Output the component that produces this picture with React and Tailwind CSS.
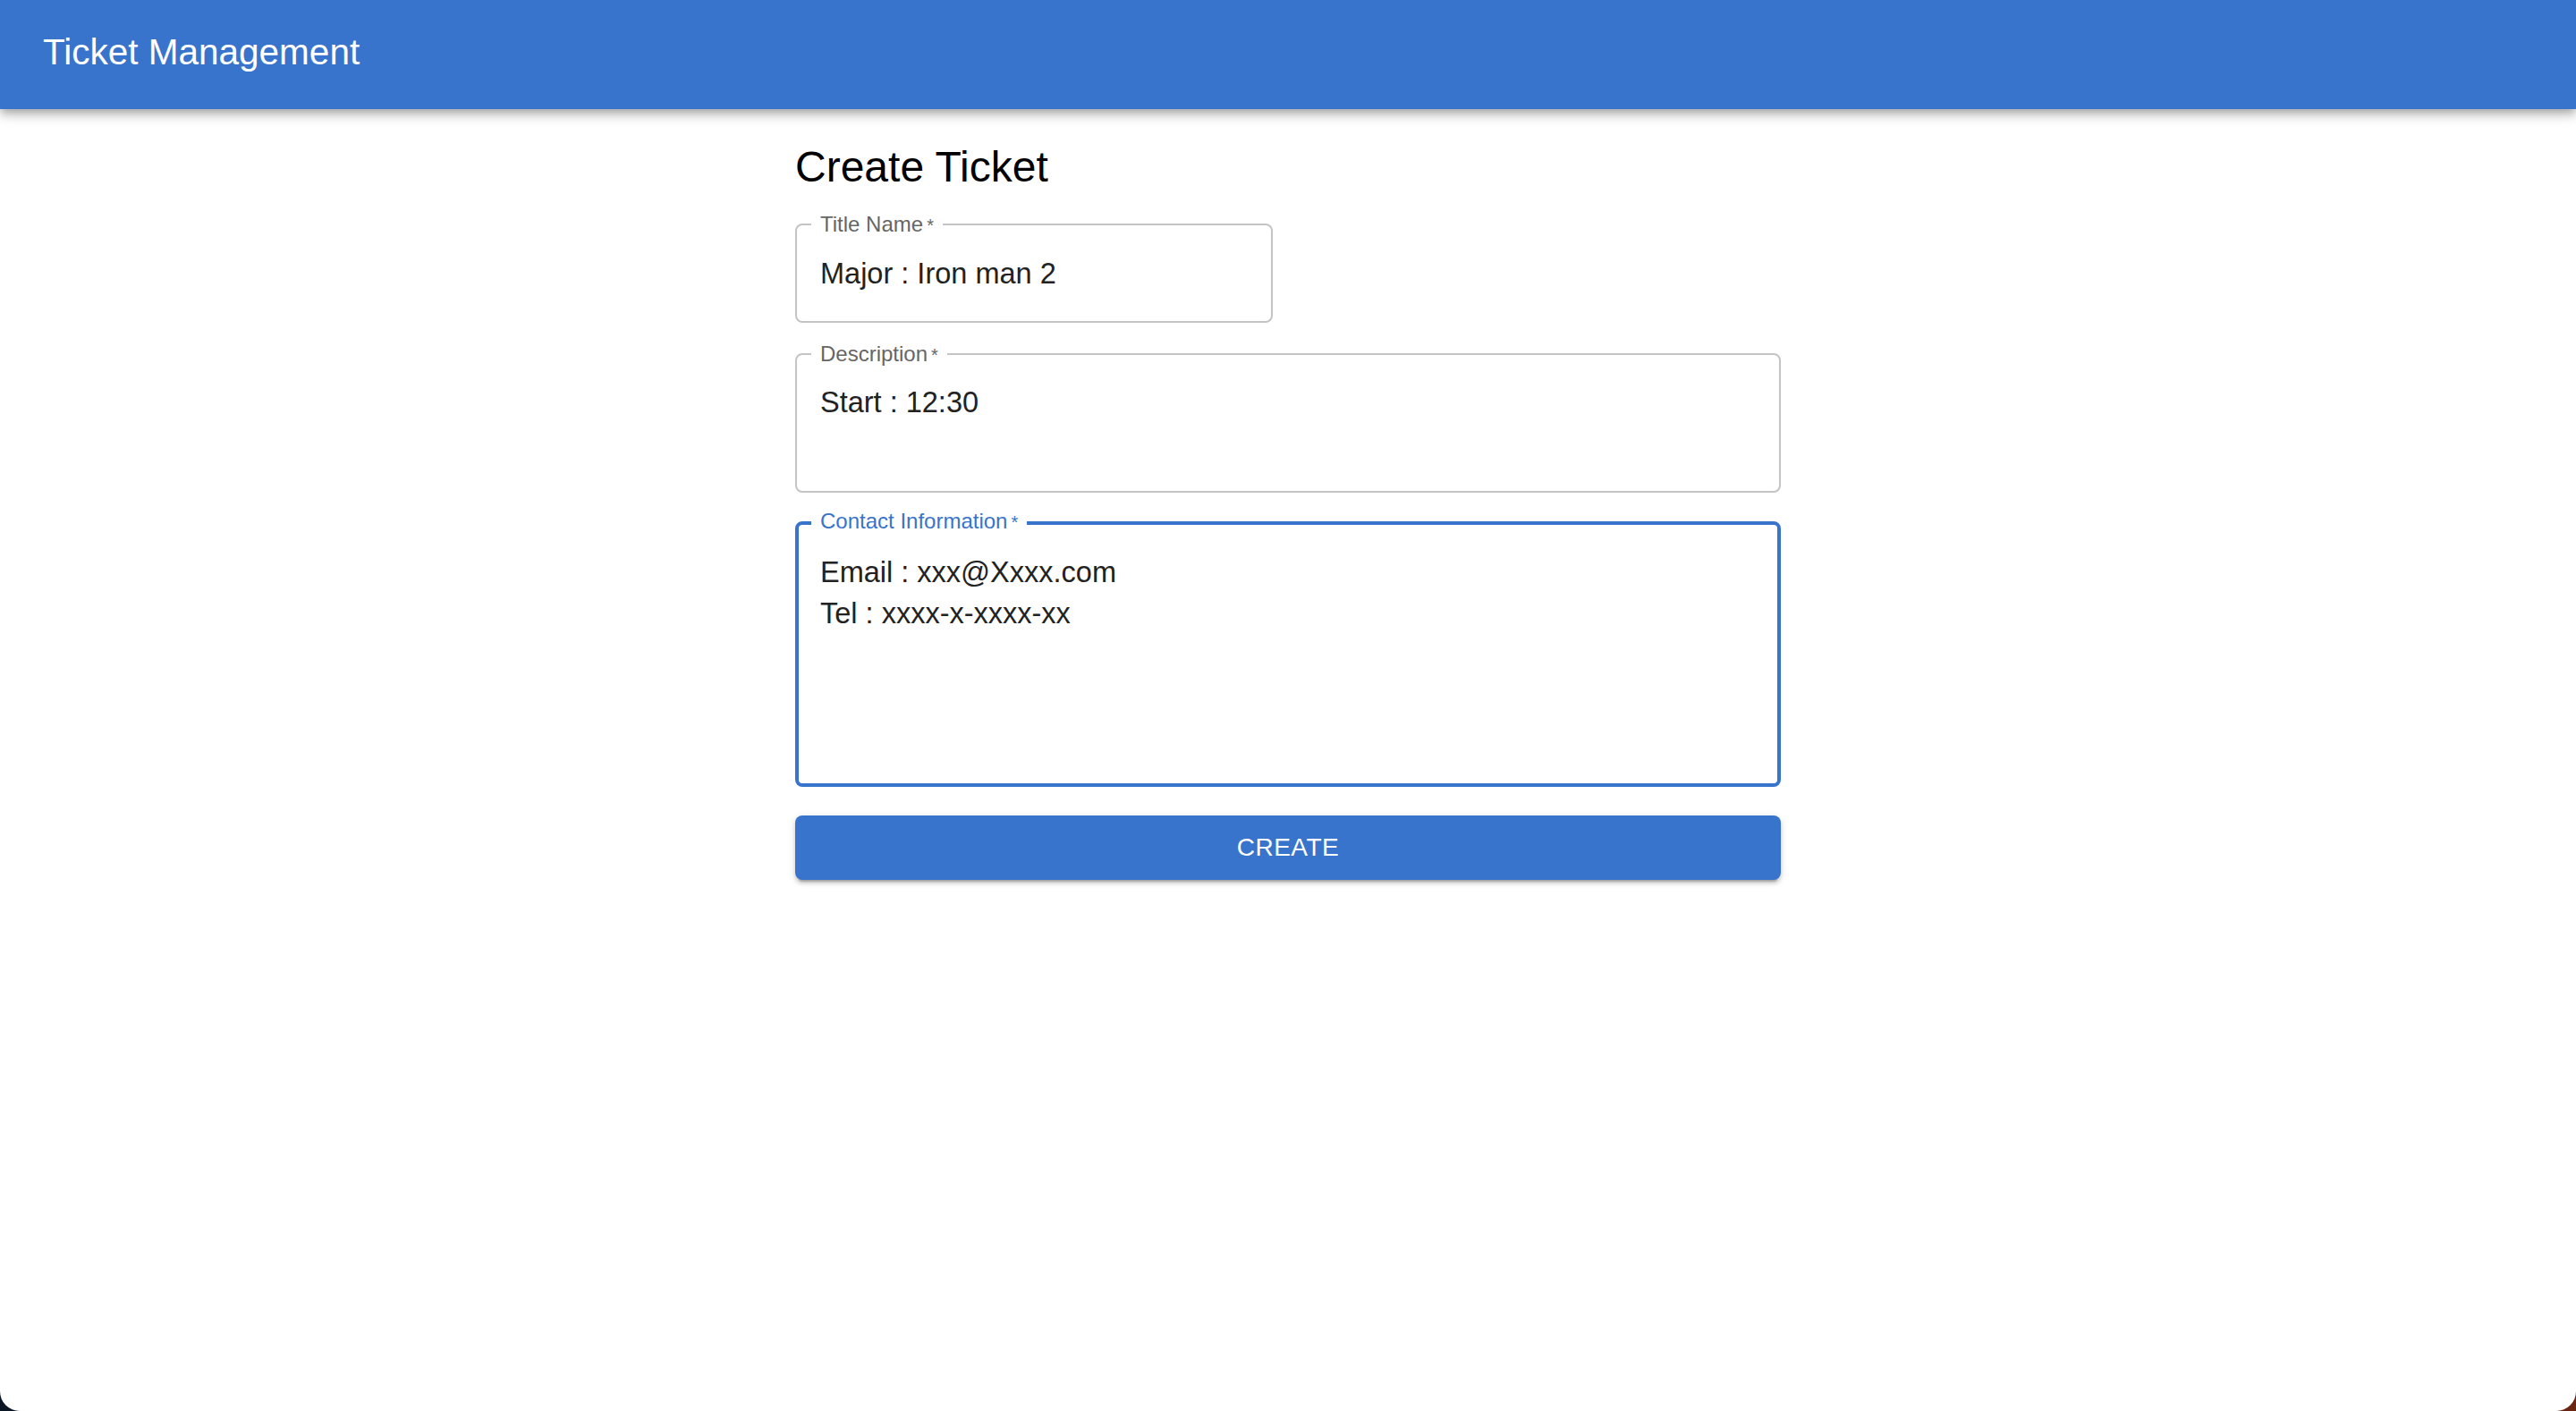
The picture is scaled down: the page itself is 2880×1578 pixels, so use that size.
export default function App() {
  const font = { fontFamily: '"Liberation Sans", Arial, sans-serif' };
  return (
    <div className="w-full h-[1578px] bg-linear-to-r from-[#0b1624] to-[#6b2612]" style={font}>
      <div className="h-full bg-white rounded-b-[22px] overflow-hidden flex flex-col">
        <header className="h-[122px] shrink-0 bg-[#3874cb] flex items-center pl-[48px] pb-[6px] shadow-[0_4px_8px_-2px_rgba(0,0,0,0.2),0_8px_10px_0_rgba(0,0,0,0.14),0_2px_20px_0_rgba(0,0,0,0.12)] relative z-10">
          <h1 className="text-white text-[40.5px] leading-[40px]">Ticket Management</h1>
        </header>

        <main className="w-[1102px] mx-auto flex flex-col">
          <h2 className="mt-[37px] text-[48px] leading-[56px] text-black">Create Ticket</h2>

          <div className="mt-[35px] flex flex-col">
            <Field label="Title Name" width="w-[534px]">
              <input
                readOnly
                value="Major : Iron man 2"
                className="w-full pt-[31px] pb-[29px] pl-[26px] pr-[26px] text-[32.5px] leading-[46px] h-[107px] text-[#222] bg-transparent outline-none"
              />
            </Field>

            <div className="mt-[34px]">
              <Field label="Description" width="w-full">
                <textarea
                  readOnly
                  rows={2}
                  value="Start : 12:30"
                  className="block w-full pt-[30px] pb-[28px] px-[26px] text-[32.5px] leading-[46px] h-[152px] text-[#222] bg-transparent outline-none resize-none overflow-hidden"
                />
              </Field>
            </div>

            <div className="mt-[32px]">
              <Field label="Contact Information" width="w-full" focused>
                <textarea
                  readOnly
                  rows={5}
                  value={'Email : xxx@Xxxx.com\nTel : xxxx-x-xxxx-xx'}
                  className="block w-full pt-[30px] pb-[26px] px-[24px] text-[32.5px] leading-[46px] h-[289px] text-[#222] bg-transparent outline-none resize-none overflow-hidden"
                />
              </Field>
            </div>

            <button className="mt-[32px] h-[72px] w-full rounded-[8px] bg-[#3874cb] text-white text-[28px] tracking-[0.5px] shadow-[0_6px_2px_-4px_rgba(0,0,0,0.2),0_4px_4px_0_rgba(0,0,0,0.14),0_2px_10px_0_rgba(0,0,0,0.12)]">
              CREATE
            </button>
          </div>
        </main>
      </div>
    </div>
  );
}

function Field({ label, width, focused, children }) {
  return (
    <div
      className={
        'relative rounded-[8px] bg-white ' +
        width +
        (focused ? ' border-[4px] border-[#3874cb]' : ' border-2 border-[#c4c4c4]')
      }
    >
      <span
        className={
          'absolute bg-white px-[10px] text-[24px] leading-[24px] whitespace-nowrap ' +
          (focused ? 'top-[-16px] left-[14px] text-[#3874cb]' : 'top-[-13px] left-[16px] text-[#666]')
        }
      >
        {label}
        <span className="ml-[4px] text-[20px]">*</span>
      </span>
      {children}
    </div>
  );
}
